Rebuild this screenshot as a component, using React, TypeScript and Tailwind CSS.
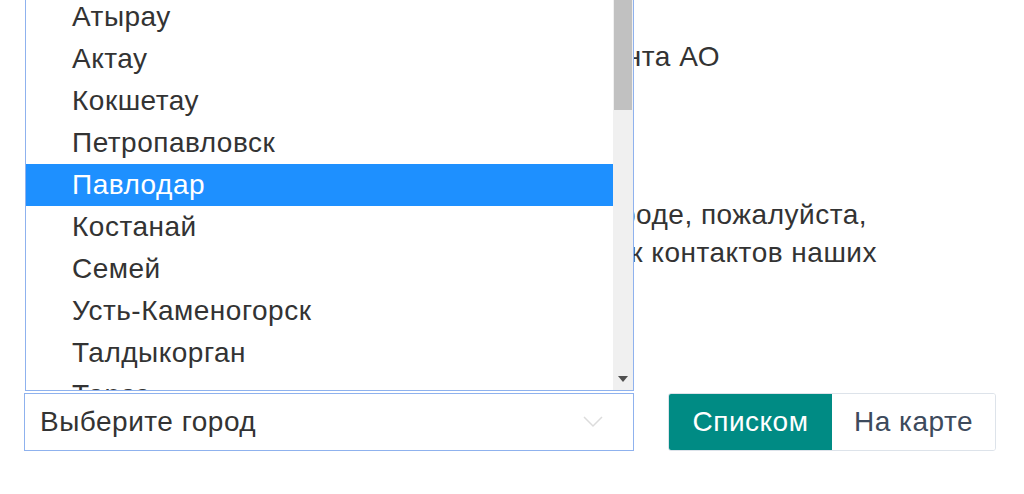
import React from 'react';

const cities = [
  'Атырау',
  'Актау',
  'Кокшетау',
  'Петропавловск',
  'Павлодар',
  'Костанай',
  'Семей',
  'Усть-Каменогорск',
  'Талдыкорган',
  'Тараз',
  'Туркестан',
];

export default function App() {
  const active = 'Павлодар';

  return (
    <div className="relative h-[494px] w-[1024px] overflow-hidden bg-white font-['Liberation_Sans',Arial,sans-serif] text-[28px] tracking-[0.5px] text-[#333]">
      {/* page content under the open list */}
      <div className="pl-6 pt-[38px] leading-[38px]">
        <p className="w-[696px] overflow-hidden whitespace-nowrap text-right">
          Контакты офисов агента АО
        </p>
        <div className="mt-[120px]">
          <p className="w-[843px] overflow-hidden whitespace-nowrap text-right">
            Если офиса нет в вашем городе, пожалуйста,
          </p>
          <p className="w-[853px] overflow-hidden whitespace-nowrap text-right">
            смотрите список контактов наших
          </p>
        </div>
      </div>

      {/* city select + view switch */}
      <div className="absolute left-6 top-[393px] flex items-center">
        <div className="flex h-[58px] w-[610px] items-center justify-between border border-[#8fb2ee] pl-[15px] pr-[30px]">
          <span>Выберите город</span>
          <svg width="20" height="12" viewBox="0 0 20 12" fill="none">
            <path d="M1 1l9 9 9-9" stroke="#dcdcdc" strokeWidth="1.5" />
          </svg>
        </div>
        <div className="ml-[34px] flex h-[58px] overflow-hidden rounded-[3px] border border-[#dde3ea]">
          <button className="w-[163px] bg-[#008b84] text-white">Списком</button>
          <button className="w-[163px] bg-white text-[#3d4a5c]">На карте</button>
        </div>
      </div>

      {/* open dropdown list */}
      <div className="absolute left-[25px] top-0 flex h-[391px] w-[609px] overflow-hidden border-x border-b border-[#8fb2ee] bg-white">
        <ul className="-mt-1 flex-1">
          {cities.map((c) => (
            <li
              key={c}
              className={`flex h-[42px] items-center pl-[46px] ${
                c === active ? 'bg-[#1e90ff] text-white' : 'text-[#333]'
              }`}
            >
              {c}
            </li>
          ))}
        </ul>
        <div className="relative w-5 shrink-0 bg-[#f0f0f0]">
          <div className="ml-px h-[110px] w-[18px] bg-[#c1c1c1]" />
          <svg className="absolute bottom-[8px] left-[5px]" width="10" height="6" viewBox="0 0 10 6">
            <path d="M0 0h10L5 6z" fill="#505050" />
          </svg>
        </div>
      </div>
    </div>
  );
}
